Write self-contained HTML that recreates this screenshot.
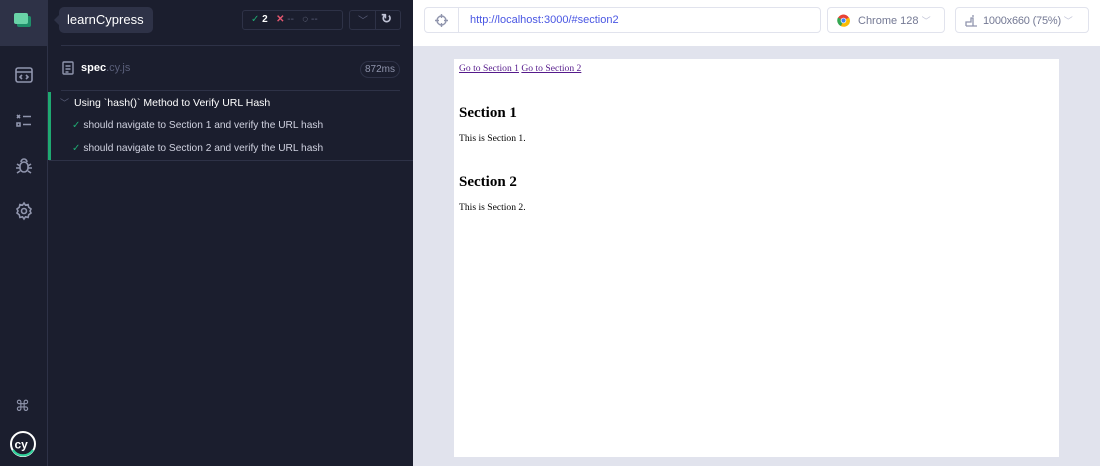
<!DOCTYPE html><html><head><style>
*{box-sizing:border-box;margin:0;padding:0}
body{width:1100px;height:466px;overflow:hidden;position:relative;font-family:"Liberation Sans",sans-serif;background:#1b1e2e}
.a{position:absolute}
.side{left:0;top:0;width:48px;height:466px;background:#1b1e2e;border-right:1px solid #2e3247}
.ic{position:absolute;left:14px;width:20px;height:20px}
.rep{left:49px;top:0;width:364px;height:466px;background:#1b1e2e}
.txt{color:#d0d2e0;font-size:10.2px;white-space:nowrap}
.main{left:413px;top:0;width:687px;height:466px;background:#e1e3ed}
.hdr{left:0;top:0;width:687px;height:46px;background:#fff}
.box{border:1px solid #e1e3ed;border-radius:4px;background:#fff}
</style></head><body>
<div class="a side">
 <div class="a" style="left:0;top:0;width:48px;height:46px;background:#2e3247"></div>
 <div class="a" style="left:17px;top:16px;width:14px;height:11px;background:#1f8f6a;border-radius:2px"></div>
 <div class="a" style="left:14px;top:13px;width:14px;height:11px;background:#69d3a7;border-radius:2px"></div>
 <svg class="ic" style="top:65px" viewBox="0 0 20 20" fill="none" stroke="#9095ad" stroke-width="1.6"><rect x="2" y="3" width="16" height="14" rx="2"/><path d="M2 7h16M8 10l-2 2 2 2M12 10l2 2-2 2"/></svg>
 <svg class="ic" style="top:111px" viewBox="0 0 20 20" fill="none" stroke="#9095ad" stroke-width="1.6"><path d="M3 4l3 3M6 4l-3 3M9 5.5h8M3 12h3v3H3zM9 13.5h8"/></svg>
 <svg class="ic" style="top:156px" viewBox="0 0 20 20" fill="none" stroke="#9095ad" stroke-width="1.6"><path d="M7 6a3 3 0 016 0"/><rect x="6" y="6" width="8" height="10" rx="4"/><path d="M3 8l3 2M17 8l-3 2M2 12h4M18 12h-4M3 17l3-2M17 17l-3-2"/></svg>
 <svg class="ic" style="top:201px" viewBox="0 0 20 20" fill="none" stroke="#9095ad" stroke-width="1.6"><circle cx="10" cy="10" r="2.5"/><path d="M10 2l1.5 2.2 2.6-.6.6 2.6L17 8l-1 2 1 2-2.3 1.8-.6 2.6-2.6-.6L10 18l-1.5-2.2-2.6.6-.6-2.6L3 12l1-2-1-2 2.3-1.8.6-2.6 2.6.6z"/></svg>
 <div class="a" style="left:15px;top:397px;color:#9095ad;font-size:15px">⌘</div>
 <svg class="a" style="left:9px;top:430px" width="28" height="28" viewBox="0 0 28 28"><circle cx="14" cy="14" r="12" fill="none" stroke="#fff" stroke-width="2"/><path d="M4 20a12 12 0 0020 0" fill="none" stroke="#31d19b" stroke-width="2.2"/><text x="5.5" y="18.5" font-size="12" fill="#fff" font-family="Liberation Sans" font-weight="bold">cy</text></svg>
</div>
<div class="a rep">
 <div class="a" style="left:5px;top:15px;border:5px solid transparent;border-right-color:#2e3247;border-left:none"></div>
 <div class="a" style="left:10px;top:7px;width:94px;height:26px;background:#2e3247;border-radius:5px;color:#fff;font-size:13px;line-height:26px;padding-left:8px">learnCypress</div>
 <div class="a" style="left:193px;top:10px;width:101px;height:20px;border:1px solid #2e3247;border-radius:3px;font-size:10px;line-height:18px;padding-left:8px;white-space:nowrap"><span style="color:#1fa971">✓</span> <b style="color:#fff">2</b>&nbsp;&nbsp; <span style="color:#e45770;font-weight:bold">✕</span> <span style="color:#5a5f7a">--</span>&nbsp;&nbsp; <span style="color:#9095ad">◌</span> <span style="color:#5a5f7a">--</span></div>
 <div class="a" style="left:300px;top:10px;width:52px;height:20px;border:1px solid #2e3247;border-radius:3px"><div class="a" style="left:25px;top:0;width:1px;height:18px;background:#2e3247"></div><span class="a" style="left:8px;top:1px;color:#5a5f7a;font-size:10px">﹀</span><span class="a" style="left:31px;top:0;color:#c0c3d6;font-size:13px;font-weight:bold">↻</span></div>
 <div class="a" style="left:12px;top:45px;width:339px;height:1px;background:#2e3247"></div>
 <svg class="a" style="left:13px;top:61px" width="12" height="14" viewBox="0 0 12 14" fill="none" stroke="#9095ad" stroke-width="1.4"><rect x="1" y="1" width="10" height="12" rx="1"/><path d="M3.5 5h5M3.5 8h5M3.5 11h3"/></svg>
 <div class="a" style="left:32px;top:62px;font-size:11px;color:#fff;font-weight:bold">spec<span style="color:#5a5f7a;font-weight:normal">.cy.js</span></div>
 <div class="a" style="left:311px;top:61px;width:40px;height:17px;border:1px solid #2e3247;border-radius:9px;color:#9095ad;font-size:10px;line-height:15px;text-align:center">872ms</div>
 <div class="a" style="left:12px;top:90px;width:339px;height:1px;background:#2e3247"></div>
 <div class="a" style="left:-1px;top:92px;width:3px;height:68px;background:#1fa971"></div>
 <div class="a" style="left:0;top:160px;width:364px;height:1px;background:#2e3247"></div>
 <div class="a" style="left:11px;top:96px;color:#5a5f7a;font-size:9px">﹀</div>
 <div class="a txt" style="left:25px;top:97px;color:#fff;font-size:10.5px">Using `hash()` Method to Verify URL Hash</div>
 <div class="a txt" style="left:23px;top:120px"><span style="color:#1fa971">✓</span> should navigate to Section 1 and verify the URL hash</div>
 <div class="a txt" style="left:23px;top:143px"><span style="color:#1fa971">✓</span> should navigate to Section 2 and verify the URL hash</div>
</div>
<div class="a main">
 <div class="a hdr">
  <div class="a box" style="left:11px;top:7px;width:397px;height:26px">
   <div class="a" style="left:33px;top:0;width:1px;height:24px;background:#e1e3ed"></div>
   <svg class="a" style="left:10px;top:6px" width="13" height="13" viewBox="0 0 13 13" fill="none" stroke="#9095ad" stroke-width="1.4"><circle cx="6.5" cy="6.5" r="4.5"/><path d="M6.5 0v4M6.5 9v4M0 6.5h4M9 6.5h4"/></svg>
   <span class="a" style="left:45px;top:6px;font-size:11px;color:#4956e3">http://localhost:3000/#section2</span>
  </div>
  <div class="a box" style="left:414px;top:7px;width:118px;height:26px">
   <svg class="a" style="left:9px;top:6px" width="13" height="13" viewBox="0 0 13 13"><circle cx="6.5" cy="6.5" r="6" fill="#e94235"/><path d="M6.5 6.5L1 3.5A6 6 0 004 12z" fill="#34a853"/><path d="M6.5 6.5L12 3.5A6 6 0 014 12z" fill="#fbbc04"/><circle cx="6.5" cy="6.5" r="2.8" fill="#fff"/><circle cx="6.5" cy="6.5" r="2.1" fill="#4285f4"/></svg>
   <span class="a" style="left:30px;top:6px;font-size:11px;color:#747994">Chrome 128 <span style="color:#c0c3d6;font-size:9px">﹀</span></span>
  </div>
  <div class="a box" style="left:542px;top:7px;width:134px;height:26px">
   <svg class="a" style="left:9px;top:6px" width="13" height="13" viewBox="0 0 13 13" fill="none" stroke="#9095ad" stroke-width="1.3"><path d="M1 12h11M1 12V8h5V4h2v8M8 1v2"/></svg>
   <span class="a" style="left:27px;top:6px;font-size:11px;color:#747994;letter-spacing:-.2px">1000x660 (75%) <span style="color:#c0c3d6;font-size:9px">﹀</span></span>
  </div>
 </div>
 <div class="a" style="left:41px;top:59px;width:605px;height:398px;background:#fff;font-family:'Liberation Serif',serif;color:#000">
  <div class="a" style="left:5px;top:4px;font-size:9.6px;white-space:nowrap"><u style="color:#551a8b">Go to Section 1</u> <u style="color:#551a8b">Go to Section 2</u></div>
  <div class="a" style="left:5px;top:46px;font-size:15px;font-weight:bold">Section 1</div>
  <div class="a" style="left:5px;top:74px;font-size:9.6px">This is Section 1.</div>
  <div class="a" style="left:5px;top:115px;font-size:15px;font-weight:bold">Section 2</div>
  <div class="a" style="left:5px;top:143px;font-size:9.6px">This is Section 2.</div>
 </div>
</div>
</body></html>
